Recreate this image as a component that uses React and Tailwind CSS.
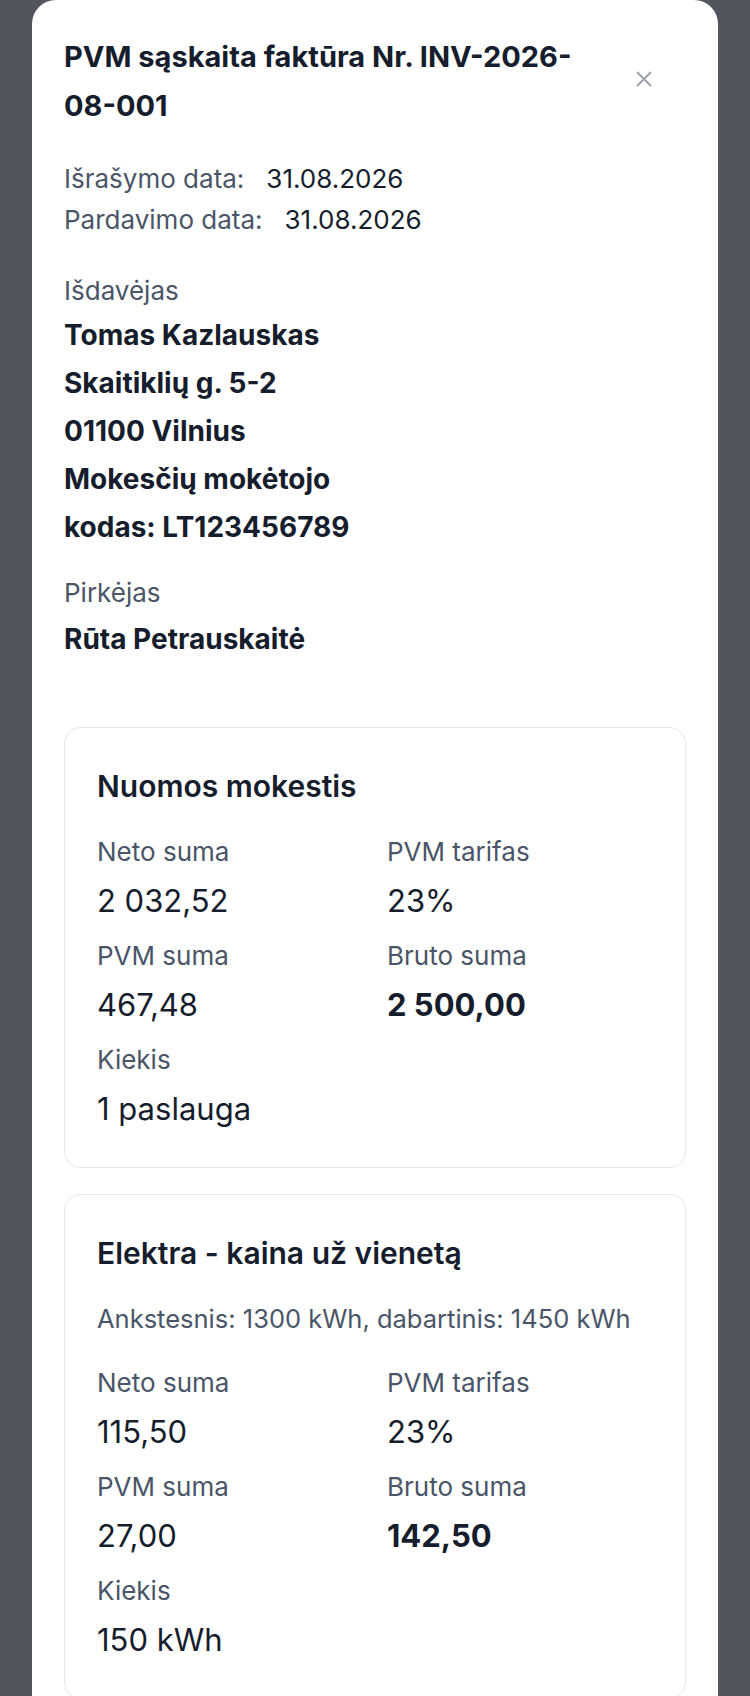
import React from "react";

const items = [
  {
    title: "Nuomos mokestis",
    note: null,
    neto: "2 032,52",
    tarifas: "23%",
    pvm: "467,48",
    bruto: "2 500,00",
    kiekis: "1 paslauga",
  },
  {
    title: "Elektra - kaina už vienetą",
    note: "Ankstesnis: 1300 kWh, dabartinis: 1450 kWh",
    neto: "115,50",
    tarifas: "23%",
    pvm: "27,00",
    bruto: "142,50",
    kiekis: "150 kWh",
  },
];

function Field({ label, value, strong }) {
  return (
    <div>
      <div className="text-[26px] leading-[40px] text-[#4a5568]">{label}</div>
      <div
        className={`mt-[7px] text-[31px] leading-[44px] text-[#161d2d] ${
          strong ? "font-bold" : "font-normal"
        }`}
      >
        {value}
      </div>
    </div>
  );
}

function ItemCard({ item }) {
  return (
    <div className="rounded-[16px] border border-[#e5e7eb] px-8 pt-9 pb-9">
      <h3 className="text-[30px] font-semibold leading-[44px] text-[#161d2d]">{item.title}</h3>
      {item.note && (
        <div className="mt-6 text-[25.5px] leading-[40px] text-[#4a5568]">{item.note}</div>
      )}
      <div className="mt-6 grid grid-cols-2 gap-x-6 gap-y-[13px]">
        <Field label="Neto suma" value={item.neto} />
        <Field label="PVM tarifas" value={item.tarifas} />
        <Field label="PVM suma" value={item.pvm} />
        <Field label="Bruto suma" value={item.bruto} strong />
        <Field label="Kiekis" value={item.kiekis} />
      </div>
    </div>
  );
}

export default function App() {
  return (
    <div className="min-h-screen bg-[#51555e] px-8 font-['Inter',sans-serif]">
      <div className="rounded-t-[24px] bg-white px-8 pt-8 pb-10">
        <div className="flex items-start justify-between">
          <h2 className="max-w-[520px] text-[29px] font-bold leading-[49px] text-[#161d2d]">
            PVM sąskaita faktūra Nr. INV-2026-08-001
          </h2>
          <button className="mt-[39px] mr-[34px] text-[#9ca3af]">
            <svg width="16" height="16" viewBox="0 0 16 16" fill="none" stroke="currentColor" strokeWidth="2">
              <path d="M1 1 L15 15 M15 1 L1 15" />
            </svg>
          </button>
        </div>

        <div className="mt-7 text-[26px] leading-[41px]">
          <div className="flex gap-[22px]">
            <span className="text-[#4a5568]">Išrašymo data:</span>
            <span className="text-[#161d2d]">31.08.2026</span>
          </div>
          <div className="flex gap-[22px]">
            <span className="text-[#4a5568]">Pardavimo data:</span>
            <span className="text-[#161d2d]">31.08.2026</span>
          </div>
        </div>

        <div className="mt-[30px] text-[26px] leading-[41px] text-[#4a5568]">Išdavėjas</div>
        <div className="max-w-[300px] text-[28px] font-bold leading-[48px] text-[#161d2d]">
          <div>Tomas Kazlauskas</div>
          <div>Skaitiklių g. 5-2</div>
          <div>01100 Vilnius</div>
          <div>Mokesčių mokėtojo kodas: LT123456789</div>
        </div>

        <div className="mt-[21px] text-[26px] leading-[41px] text-[#4a5568]">Pirkėjas</div>
        <div className="mt-[2px] text-[28px] font-bold leading-[48px] text-[#161d2d]">
          Rūta Petrauskaitė
        </div>

        <div className="mt-16 flex flex-col gap-[26px]">
          {items.map((it) => (
            <ItemCard key={it.title} item={it} />
          ))}
        </div>
      </div>
    </div>
  );
}
